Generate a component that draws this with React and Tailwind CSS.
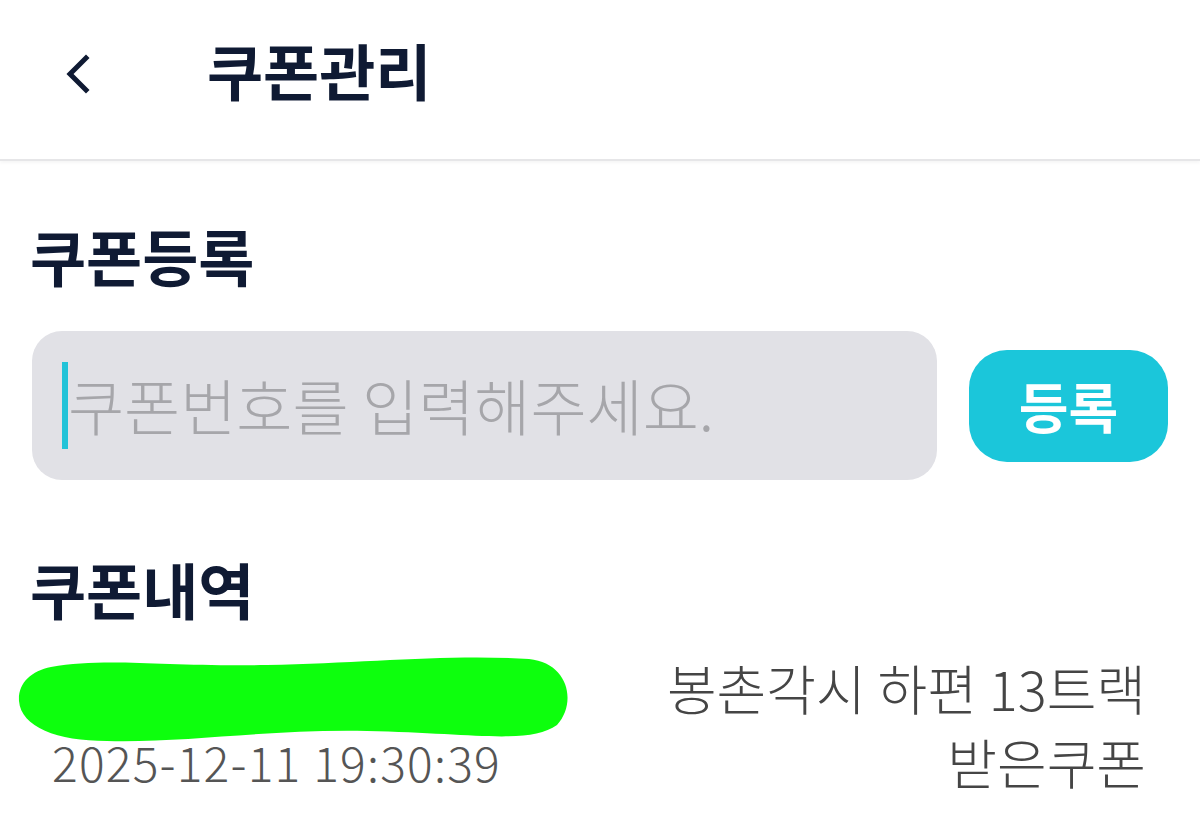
import React, { useState } from "react";

const font = { fontFamily: '"Noto Sans CJK KR", "Noto Sans", sans-serif' };

function BackIcon() {
  return (
    <svg width="28" height="40" viewBox="0 0 28 40" fill="none">
      <path d="M22 4 L6 20 L22 36" stroke="#0f1a33" strokeWidth="5" strokeLinecap="square" />
    </svg>
  );
}

function Scribble() {
  return (
    <svg width="556" height="88" viewBox="0 0 556 88" className="block">
      <path
        d="M34 12 C90 2 150 12 250 10 C350 8 430 -1 512 4 C552 8 560 48 540 70 C512 90 455 78 350 76 C250 74 170 88 90 86 C40 86 4 72 2 46 C1 28 14 16 34 12 Z"
        fill="#0dff0d"
      />
    </svg>
  );
}

export default function App() {
  const [code, setCode] = useState("");

  return (
    <div className="w-[1200px] h-[827px] bg-white overflow-hidden" style={font}>
      <header className="h-[161px] pb-[12px] flex items-center border-b-2 border-[#e6e6e8] shadow-[0_2px_3px_rgba(0,0,0,0.04)]">
        <div className="w-[207px] pl-[64px] flex items-center">
          <BackIcon />
        </div>
        <h1 className="-mt-[8px] text-[61px] font-bold text-[#0f1a33] leading-none">쿠폰관리</h1>
      </header>

      <section className="px-[30px] pt-[64px]">
        <h2 className="text-[61px] font-bold text-[#0f1a33] leading-none">쿠폰등록</h2>

        <div className="mt-[45px] flex items-center">
          <div className="w-[905px] h-[149px] ml-[2px] rounded-[30px] bg-[#e1e1e6] flex items-center pl-[30px]">
            <span className="w-[6px] h-[87px] bg-[#22c3d8]" />
            <input
              value={code}
              onChange={(e) => setCode(e.target.value)}
              placeholder="쿠폰번호를 입력해주세요."
              className="flex-1 min-w-0 bg-transparent outline-none text-[61px] font-light text-[#333] placeholder:text-[#a6a6aa] -mt-[2px]"
            />
          </div>
          <button className="ml-[32px] w-[199px] h-[112px] rounded-[38px] bg-[#1bc6da] text-white text-[54px] font-bold leading-none">
            등록
          </button>
        </div>

        <h2 className="mt-[78px] text-[61px] font-bold text-[#0f1a33] leading-none">쿠폰내역</h2>

        <div className="mt-[36px] flex justify-between">
          <div className="-ml-[13px]">
            <Scribble />
            <div className="ml-[35px] -mt-[6px] text-[48px] font-light text-[#555] leading-none tracking-[1.2px]">
              2025-12-11 19:30:39
            </div>
          </div>
          <div className="mr-[24px] -mt-[4px] text-right text-[54px] font-light text-[#454545] leading-[74px]">
            <div>봉촌각시 하편 13트랙</div>
            <div>받은쿠폰</div>
          </div>
        </div>
      </section>
    </div>
  );
}
